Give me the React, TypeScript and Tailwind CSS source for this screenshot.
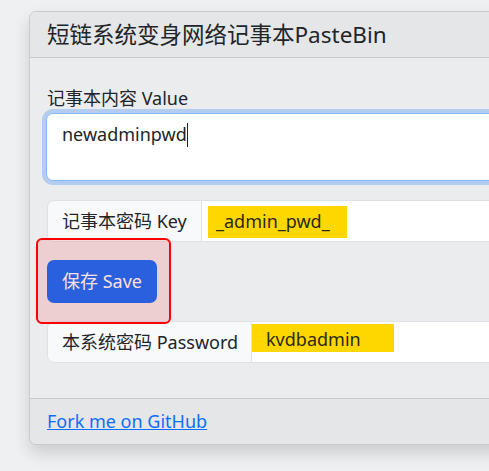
import React from "react";

const font = { fontFamily: '"Noto Sans", "Noto Sans CJK SC", sans-serif' };

export default function App() {
  return (
    <div
      className="w-[489px] h-[471px] overflow-hidden bg-[#eef0f2] pt-[11px] pl-[29px] text-[#212529]"
      style={font}
    >
      <div className="w-[520px] rounded-[7px] border border-[#c9cacc] bg-[#ebecee] shadow-[0_8px_16px_rgba(0,0,0,0.15)]">
        <div className="h-[46px] border-b border-[#c9cacc] bg-[#e5e6e8] rounded-t-[7px] px-[17px] flex items-center">
          <h5 className="text-[22.5px] leading-[27px]">短链系统变身网络记事本PasteBin</h5>
        </div>
        <div className="px-[17px] pt-[27px] pb-[35px]">
          <label className="block text-[18px] leading-[27px]">记事本内容 Value</label>
          <div className="mt-[1px] ml-[-1px] h-[68px] rounded-[7px] border border-[#86b7fe] bg-white shadow-[0_0_0_4px_rgba(13,110,253,0.25)] px-[15px] pt-[7px] text-[18px] leading-[27px] flex items-start">
            <span>newadminpwd</span>
            <span className="inline-block w-px h-[24px] mt-[2px] bg-[#212529]" />
          </div>

          <div className="mt-[19px] flex h-[42px] text-[18px] leading-[27px] whitespace-nowrap">
            <div className="w-[155px] shrink-0 rounded-l-[7px] border border-[#dee2e6] bg-[#f8f9fa] px-[14px] flex items-center">
              记事本密码 Key
            </div>
            <div className="relative flex-1 border-y border-[#dee2e6] bg-white flex items-center px-[14px]">
              <span className="absolute left-[6px] top-[5px] h-[32px] w-[139px] bg-[#ffd700]" />
              <span className="relative text-[#2a2a12]">_admin_pwd_</span>
            </div>
          </div>

          <div className="relative mt-[18px]">
            <button className="h-[43px] w-[110px] rounded-[7px] bg-[#0d6efd] text-white text-[18px] leading-[27px]">
              保存 Save
            </button>
            <div className="absolute left-[-11px] top-[-22px] w-[135px] h-[86px] rounded-[6px] border-[2.5px] border-[#ff0000] bg-[rgba(255,0,0,0.12)]" />
          </div>

          <div className="mt-[18px] flex h-[42px] text-[18px] leading-[27px] whitespace-nowrap">
            <div className="w-[205px] shrink-0 rounded-l-[7px] border border-[#dee2e6] bg-[#f8f9fa] px-[14px] flex items-center">
              本系统密码 Password
            </div>
            <div className="relative flex-1 border-y border-[#dee2e6] bg-white flex items-center px-[14px]">
              <span className="absolute left-0 top-[2px] h-[28px] w-[142px] bg-[#ffd700]" />
              <span className="relative text-[#2a2a12] -mt-[6px]">kvdbadmin</span>
            </div>
          </div>
        </div>
        <div className="h-[46px] border-t border-[#c9cacc] bg-[#e5e6e8] rounded-b-[7px] px-[17px] flex items-center">
          <a href="#" className="text-[18px] leading-[27px] text-[#0d6efd] underline">
            Fork me on GitHub
          </a>
        </div>
      </div>
    </div>
  );
}
